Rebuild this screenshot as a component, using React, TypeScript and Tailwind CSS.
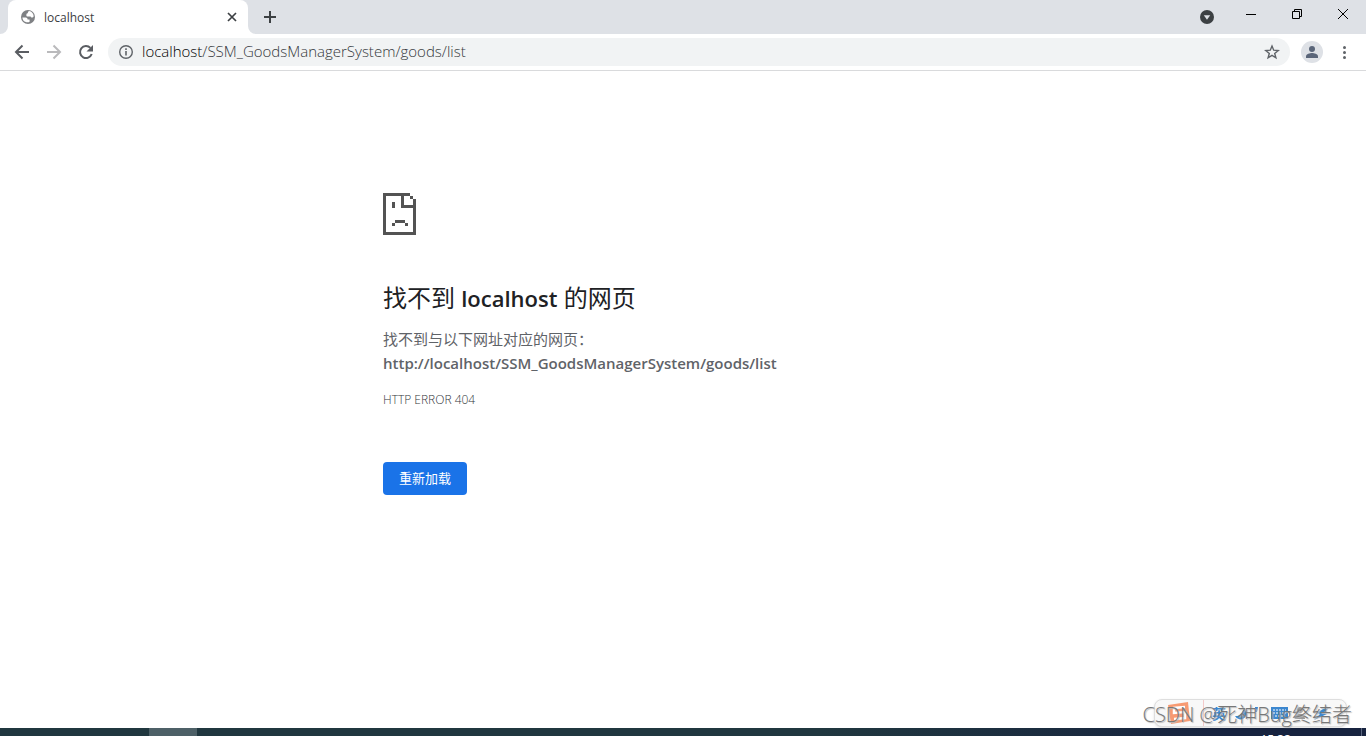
import type { ReactNode } from "react";

const IconButton = ({ label, className = "", children }: { label: string; className?: string; children: ReactNode }) => (
  <button type="button" aria-label={label} className={`flex shrink-0 items-center justify-center ${className}`}>
    {children}
  </button>
);

const TabStrip = () => (
  <div className="flex h-[34px] bg-[#dee1e6] pl-2">
    <div className="relative flex w-60 items-center rounded-t-lg bg-white pl-3 pr-2">
      <svg className="absolute -left-2 bottom-0 h-2 w-2" viewBox="0 0 8 8" fill="#fff">
        <path d="M8 0v8H0a8 8 0 0 0 8-8z" />
      </svg>
      <svg className="absolute -right-2 bottom-0 h-2 w-2" viewBox="0 0 8 8" fill="#fff">
        <path d="M0 0v8h8a8 8 0 0 1-8-8z" />
      </svg>
      <svg className="h-4 w-4" viewBox="0 0 16 16">
        <circle cx="8" cy="8" r="7" fill="#7f8184" />
        <path d="M2.4 8.6h3.2c1.6 0 2 1.1 2 2h2v2.1c-1.2 1-5 .6-6.4-1.5-.5-.8-.8-1.7-.8-2.6zM6.4 6.9V5.4c0-.8.7-1.2 1.5-1.2V3.1L9 2.1c1.8.2 3.4 1.5 4.2 3.2.3.7.4 1.5.4 2.2-.3.8-.9 1.1-1.6 1.1-.8 0-1.2-.5-1.3-1.1H8.2c-.9 0-1.3-.3-1.8-.6z" fill="#fff" />
      </svg>
      <span className="ml-2 flex-1 pt-px text-[12px]">localhost</span>
      <IconButton label="关闭标签页" className="h-4 w-4">
        <svg className="h-4 w-4" viewBox="0 0 16 16" fill="none" stroke="#3c4043" strokeWidth="1.7">
          <path d="M4 4l8 8M12 4l-8 8" />
        </svg>
      </IconButton>
    </div>
    <IconButton label="新标签页" className="ml-2 w-7">
      <svg className="h-4 w-4" viewBox="0 0 16 16" fill="none" stroke="#3c4043" strokeWidth="2">
        <path d="M8 2v12M2 8h12" />
      </svg>
    </IconButton>
    <div className="flex-1" />
    <IconButton label="搜索标签页" className="mr-[13px] w-4">
      <svg className="h-4 w-4" viewBox="0 0 16 16">
        <circle cx="8" cy="8" r="7" fill="#3c4043" />
        <path d="M4.8 6.2h6.4L8 10.8z" fill="#dee1e6" />
      </svg>
    </IconButton>
    <IconButton label="最小化" className="h-7 w-[46px]">
      <svg className="h-3 w-3" viewBox="0 0 12 12" fill="#000">
        <path d="M1 6h10v1H1z" />
      </svg>
    </IconButton>
    <IconButton label="还原" className="h-7 w-[46px]">
      <svg className="h-3 w-3" viewBox="0 0 12 12" fill="none" stroke="#000">
        <path d="M1.5 3.5h7v7h-7zM3.5 3.5v-2h7v7h-2" />
      </svg>
    </IconButton>
    <IconButton label="关闭" className="h-7 w-[46px]">
      <svg className="h-3 w-3" viewBox="0 0 12 12" fill="none" stroke="#000">
        <path d="M1 1l10 10M11 1L1 11" />
      </svg>
    </IconButton>
  </div>
);

const Toolbar = () => (
  <div className="flex h-[37px] items-center border-b border-[#d9dadc] bg-white px-[14px]">
    <IconButton label="后退">
      <svg className="h-4 w-4" viewBox="0 0 16 16" fill="none" stroke="#5a5d62" strokeWidth="2">
        <path d="M15 8H2.5M8.5 1.5L2 8l6.5 6.5" />
      </svg>
    </IconButton>
    <IconButton label="前进" className="ml-4">
      <svg className="h-4 w-4" viewBox="0 0 16 16" fill="none" stroke="#bababc" strokeWidth="2">
        <path d="M1 8h12.5M7.5 1.5L14 8l-6.5 6.5" />
      </svg>
    </IconButton>
    <IconButton label="重新加载此页" className="ml-4">
      <svg className="h-4 w-4" viewBox="0 0 16 16">
        <path d="M13.7 10A6 6 0 1 1 12.4 3.9" fill="none" stroke="#5a5d62" strokeWidth="2" />
        <path d="M15 1v6.500H8.5z" fill="#5a5d62" />
      </svg>
    </IconButton>
    <div className="ml-[14px] flex h-7 flex-1 items-center rounded-full bg-[#f1f3f4] px-[10px]">
      <IconButton label="查看网站信息">
        <svg className="h-4 w-4" viewBox="0 0 16 16">
          <circle cx="8" cy="8" r="6.3" fill="none" stroke="#5f6368" strokeWidth="1.4" />
          <path d="M7.2 7h1.6v4.5H7.2zM7.2 4.300h1.6v1.6H7.2z" fill="#5f6368" />
        </svg>
      </IconButton>
      <div className="ml-2 flex-1 pb-0.5 text-[15px] leading-5 font-light">
        <span className="text-black">localhost</span>
        <span className="text-[#34373b]">/SSM_GoodsManagerSystem/goods/list</span>
      </div>
      <IconButton label="为此标签页添加书签">
        <svg className="h-4 w-4" viewBox="0 0 16 16" fill="none" stroke="#5f6368" strokeWidth="1.4">
          <path d="M8 2l1.7 4.2 4.5.3-3.5 2.9 1.2 4.4L8 11.4l-3.9 2.4 1.2-4.4-3.5-2.9 4.5-.3z" />
        </svg>
      </IconButton>
    </div>
    <IconButton label="个人资料" className="ml-[11px] h-[22px] w-[22px] rounded-full bg-[#dee1e6]">
      <svg className="h-[22px] w-[22px]" viewBox="0 0 22 22" fill="#5a6579">
        <circle cx="11" cy="8" r="3" />
        <path d="M5 17v-1.8C5 13 9 12 11 12s6 1 6 3.2V17z" />
      </svg>
    </IconButton>
    <IconButton label="自定义及控制" className="ml-[13px]">
      <svg className="h-4 w-4" viewBox="0 0 16 16" fill="#5f6368">
        <circle cx="8.5" cy="3.5" r="1.5" />
        <circle cx="8.5" cy="8.5" r="1.5" />
        <circle cx="8.5" cy="13.5" r="1.5" />
      </svg>
    </IconButton>
  </div>
);

const SadPage = () => (
  <svg className="h-[42px] w-[33px]" viewBox="0 0 33 42" fill="#535353" shapeRendering="crispEdges">
    <path d="M0 0h27v3H3v36h27V15H18V3h3v9h9V6h3v36H0zM27 3h3v3h-3zM9 9h3v6H9zM12 27h10v3H12zM9 30h3v3H9zM22 30h3v3h-3z" />
  </svg>
);

const ErrorPage = () => (
  <main className="mx-auto w-full max-w-[600px] flex-1 pt-[122px] text-[#5f6368]">
    <SadPage />
    <h1 className="mt-12 text-[24px] leading-[30px] text-[#202124]">
      找不到 <span className="text-[22px] font-semibold">localhost</span> 的网页
    </h1>
    <p className="mt-[14px] text-[15px] leading-6">
      找不到与以下网址对应的网页：
      <strong className="block font-semibold">http://localhost/SSM_GoodsManagerSystem/goods/list</strong>
    </p>
    <p className="mt-[13px] text-[12px] leading-6 font-light text-[#34373b]">HTTP ERROR 404</p>
    <button type="button" className="mt-[50px] rounded bg-[#1a73e8] px-4 py-2 text-[13px] leading-[17px] text-white">
      重新加载
    </button>
  </main>
);

const InputBar = () => (
  <div className="absolute right-[19px] bottom-[9px] flex h-7 w-[193px] items-center rounded-lg border border-[#dedede] bg-[#f8f8f8] shadow">
    <svg className="ml-3 h-6 w-6" viewBox="0 0 24 24">
      <path d="M1 4l20-3 2 19-19 3z" fill="#f79a72" />
      <path d="M18 6l-11 1 0 5 11-1 0 6-11 1" fill="none" stroke="#fff" strokeWidth="2.5" />
    </svg>
    <span className="ml-3 h-full border-l border-[#f3caca]" />
    <span className="ml-2 text-[14px] font-bold text-[#3c87cf]">英</span>
    <svg className="ml-2 h-4 w-28" viewBox="0 0 112 16" fill="#3c87cf">
      <path d="M9 3a6 6 0 1 1-8 8 7 7 0 0 0 8-8zM21 2h3l-1 5h-2zM37 2h17v12H37zM92 2l-9 6 3 1-6 6 13-6-4-1 6-5z" />
      <path d="M39 5h13M39 8h13M41 11h9" stroke="#fff" strokeDasharray="2 1" />
      <circle cx="66" cy="5" r="3" fill="#999" />
      <path d="M61 14c0-7 10-7 10 0z" fill="#999" />
    </svg>
  </div>
);

const App = () => (
  <div className="relative flex min-h-screen flex-col overflow-hidden bg-white font-['Open_Sans','Noto_Sans_CJK_SC',sans-serif] text-[#3c4043]">
    <TabStrip />
    <Toolbar />
    <ErrorPage />
    <InputBar />
    <footer className="flex h-2 overflow-hidden bg-linear-to-r from-[#20373f] from-60% to-[#17233f] to-90%">
      <span className="ml-[149px] w-12 bg-[#4d6067]" />
      <time className="mr-[70px] ml-auto text-[12px] leading-6 text-white">15:33</time>
      <span className="mr-1 w-px bg-[#5c6780]" />
    </footer>
    <p className="absolute right-[14px] bottom-[7px] text-[20px] leading-7 font-light text-[#777] [text-shadow:1px_1px_1px_#bbb]">
      CSDN @死神Bug终结者
    </p>
  </div>
);

export default App;
